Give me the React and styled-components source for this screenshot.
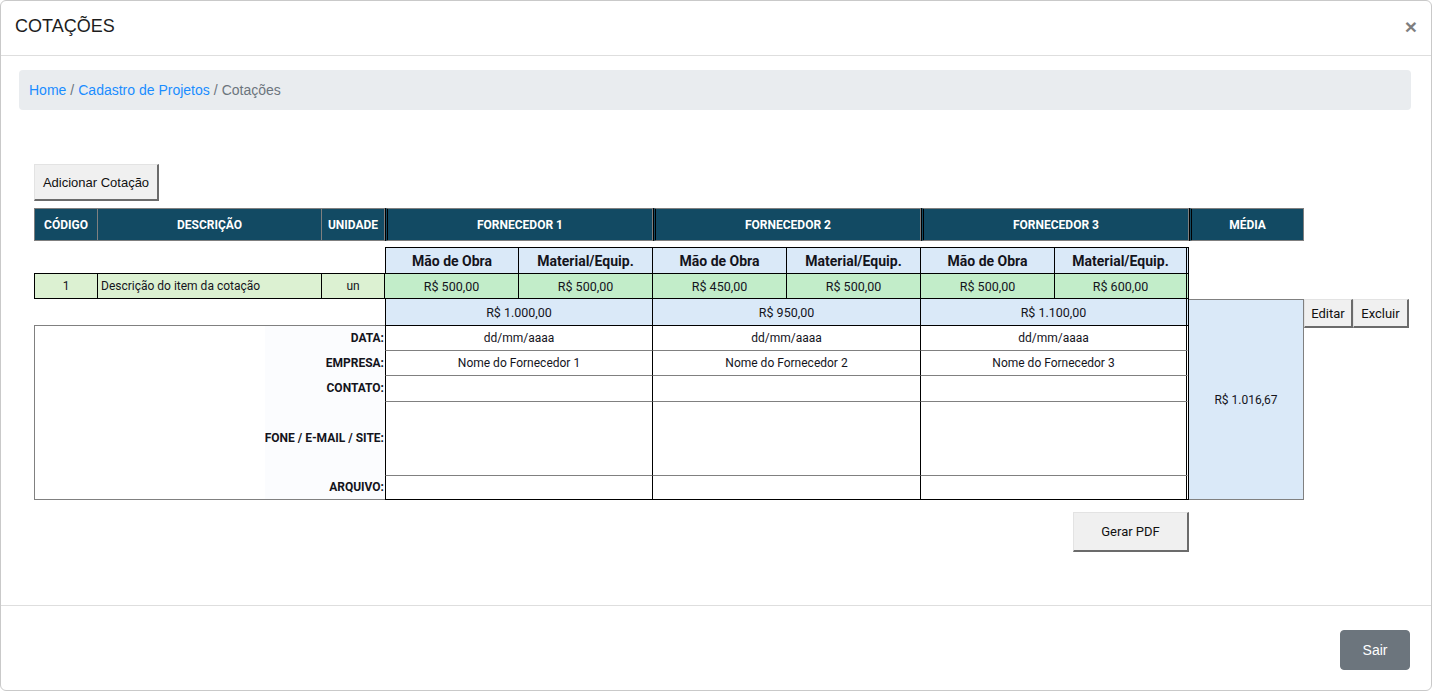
import React from 'react'
import styled, { createGlobalStyle } from 'styled-components'

const GlobalStyle = createGlobalStyle`
  html, body { margin: 0; padding: 0; background: #fff; }
  body { font-family: "Liberation Sans", Arial, sans-serif; }
`

const SHEET = 'Roboto, "Liberation Sans", sans-serif'

const fornecedores = [
  { nome: 'FORNECEDOR 1', mao: 'R$ 500,00', mat: 'R$ 500,00', total: 'R$ 1.000,00', empresa: 'Nome do Fornecedor 1' },
  { nome: 'FORNECEDOR 2', mao: 'R$ 450,00', mat: 'R$ 500,00', total: 'R$ 950,00', empresa: 'Nome do Fornecedor 2' },
  { nome: 'FORNECEDOR 3', mao: 'R$ 500,00', mat: 'R$ 600,00', total: 'R$ 1.100,00', empresa: 'Nome do Fornecedor 3' },
]

const infoRows = [
  { label: 'DATA:', key: 'data' },
  { label: 'EMPRESA:', key: 'empresa' },
  { label: 'CONTATO:', key: 'contato' },
  { label: 'TELEFONE / E-MAIL / SITE:', key: 'tel' },
  { label: 'ARQUIVO:', key: 'arquivo' },
]

function App() {
  return (
    <>
      <GlobalStyle />
      <Modal>
        <Header>
          <Title>COTAÇÕES</Title>
          <Close>×</Close>
        </Header>

        <Body>
          <Breadcrumb>
            <Crumb href="#">Home</Crumb>
            <Sep>/</Sep>
            <Crumb href="#">Cadastro de Projetos</Crumb>
            <Sep>/</Sep>
            <Current>Cotações</Current>
          </Breadcrumb>

          <Sheet>
            <AddButton>Adicionar Cotação</AddButton>

            <Grid>
              <HeadCell $col="1" $row="1" $first>CÓDIGO</HeadCell>
              <HeadCell $col="2" $row="1">DESCRIÇÃO</HeadCell>
              <HeadCell $col="3" $row="1">UNIDADE</HeadCell>
              {fornecedores.map((f, i) => (
                <HeadCell key={f.nome} $col={`${4 + i * 2} / span 2`} $row="1" $double>
                  {f.nome}
                </HeadCell>
              ))}
              <HeadCell $col="10" $row="1" $double>MÉDIA</HeadCell>

              {fornecedores.map((f, i) => (
                <React.Fragment key={f.nome + 'sub'}>
                  <SubHead $col={4 + i * 2} $row="3" $first={i === 0}>Mão de Obra</SubHead>
                  <SubHead $col={5 + i * 2} $row="3" $last={i === 2}>Material/Equip.</SubHead>
                </React.Fragment>
              ))}

              <ItemCell $col="1" $row="4" $first $bg="#dcf1d2">1</ItemCell>
              <ItemCell $col="2" $row="4" $bg="#dcf1d2" $left>Descrição do item da cotação</ItemCell>
              <ItemCell $col="3" $row="4" $bg="#dcf1d2">un</ItemCell>
              {fornecedores.map((f, i) => (
                <React.Fragment key={f.nome + 'val'}>
                  <ItemCell $col={4 + i * 2} $row="4" $bg="#c2edc9" $value>{f.mao}</ItemCell>
                  <ItemCell $col={5 + i * 2} $row="4" $bg="#c2edc9" $value $last={i === 2}>{f.mat}</ItemCell>
                </React.Fragment>
              ))}

              {fornecedores.map((f, i) => (
                <TotalCell key={f.nome + 'tot'} $col={`${4 + i * 2} / span 2`} $row="5" $first={i === 0} $last={i === 2}>
                  {f.total}
                </TotalCell>
              ))}
              <MediaCell $col="10" $row="5 / 11">R$ 1.016,67</MediaCell>
              <RowButton $col="11" $row="5">Editar</RowButton>
              <RowButton $col="12" $row="5">Excluir</RowButton>

              <LabelPanel $col="1 / 4" $row="6 / 11">
                {infoRows.map((r) => (
                  <Label key={r.key}>{r.label}</Label>
                ))}
              </LabelPanel>

              {infoRows.map((r, ri) =>
                fornecedores.map((f, i) => (
                  <InfoCell
                    key={r.key + f.nome}
                    $col={`${4 + i * 2} / span 2`}
                    $row={6 + ri}
                    $first={i === 0}
                    $last={i === 2}
                    $top={ri === 0}
                    $bottom={ri === infoRows.length - 1}
                  >
                    {r.key === 'data' ? 'dd/mm/aaaa' : r.key === 'empresa' ? f.empresa : ''}
                  </InfoCell>
                ))
              )}

              <PdfButton $col="9" $row="12">Gerar PDF</PdfButton>
            </Grid>
          </Sheet>
        </Body>

        <Footer>
          <ExitButton>Sair</ExitButton>
        </Footer>
      </Modal>
    </>
  )
}

export default App

const Modal = styled.div`
  width: 1432px;
  height: 691px;
  box-sizing: border-box;
  border: 1px solid #c9c9c9;
  border-radius: 6px;
  display: flex;
  flex-direction: column;
  overflow: hidden;
`

const Header = styled.div`
  height: 54px;
  flex: none;
  border-bottom: 1px solid #dedede;
  display: flex;
  align-items: center;
  justify-content: space-between;
  padding: 0 14px 0 14px;
`

const Title = styled.h5`
  margin: 0;
  font-family: "Liberation Sans", Arial, sans-serif;
  font-size: 18px;
  font-weight: 400;
  color: #1d1d1d;
  padding-bottom: 3px;
`

const Close = styled.span`
  font-family: "Liberation Sans", Arial, sans-serif;
  font-size: 21px;
  font-weight: 700;
  color: #000;
  opacity: 0.5;
  line-height: 1;
  padding-bottom: 3px;
`

const Body = styled.div`
  flex: 1;
  padding: 14px 20px 0 18px;
`

const Breadcrumb = styled.nav`
  height: 40px;
  background: #e9ecef;
  border-radius: 4px;
  display: flex;
  align-items: center;
  padding: 0 10px;
  font-family: "Liberation Sans", Arial, sans-serif;
  font-size: 14px;
`

const Crumb = styled.a`
  color: #1a8cff;
  text-decoration: none;
`

const Sep = styled.span`
  color: #6c757d;
  padding: 0 4px;
`

const Current = styled.span`
  color: #6c757d;
`

const Sheet = styled.div`
  padding: 54px 0 0 15px;
  display: flex;
  flex-direction: column;
  align-items: flex-start;
  gap: 7px;
`

const WinButton = styled.button`
  background: #f0f0f0;
  border-style: solid;
  border-width: 1px 2px 2px 1px;
  border-color: #e3e3e3 #6b6b6b #6b6b6b #e3e3e3;
  font-family: "Liberation Sans", Arial, sans-serif;
  font-size: 13px;
  color: #111;
  padding: 0;
  box-sizing: border-box;
`

const AddButton = styled(WinButton)`
  width: 125px;
  height: 37px;
`

const Grid = styled.div`
  display: grid;
  grid-template-columns: 64px 224px 63px repeat(6, 134px) 115px 49px 56px;
  grid-template-rows: 33px 6px 26px 26px 26px 25px 25px 26px 74px 25px 12px 40px;
`

const Cell = styled.div`
  grid-column: ${(p) => p.$col};
  grid-row: ${(p) => p.$row};
  display: flex;
  align-items: center;
  justify-content: center;
  box-sizing: border-box;
  overflow: hidden;
  white-space: nowrap;
  font-family: ${SHEET};
  font-size: 12px;
  color: #14141c;
`

const HeadCell = styled(Cell)`
  background: #124a63;
  color: #fff;
  font-weight: 700;
  border: solid #7f7f7f;
  border-width: 1px 1px 1px 0;
  ${(p) => p.$first && 'border-left: 1px solid #7f7f7f;'}
  ${(p) => p.$double && 'border-left: 3px double #000;'}
`

const SubHead = styled(Cell)`
  background: #dae9f8;
  font-weight: 700;
  font-size: 14px;
  border-top: 1px solid #000;
  border-right: ${(p) => (p.$last ? '3px double #000' : '1px solid #000')};
  ${(p) => p.$first && 'border-left: 1px solid #000;'}
`

const ItemCell = styled(Cell)`
  background: ${(p) => p.$bg};
  font-size: ${(p) => (p.$value ? '12.5px' : '12px')};
  justify-content: ${(p) => (p.$left ? 'flex-start' : 'center')};
  padding-left: ${(p) => (p.$left ? '3px' : '0')};
  border-top: 1px solid #000;
  border-bottom: 1px solid #000;
  border-right: ${(p) => (p.$last ? '3px double #000' : '1px solid #000')};
  ${(p) => p.$first && 'border-left: 1px solid #000;'}
`

const TotalCell = styled(Cell)`
  background: #dae9f8;
  font-size: 12.5px;
  border-right: ${(p) => (p.$last ? '3px double #000' : '1px solid #000')};
  ${(p) => p.$first && 'border-left: 1px solid #000;'}
`

const MediaCell = styled(Cell)`
  background: #dae9f8;
  border: 1px solid #808080;
  border-left: none;
`

const InfoCell = styled(Cell)`
  background: #fff;
  border-top: 1px solid ${(p) => (p.$top ? '#000' : '#808080')};
  border-right: ${(p) => (p.$last ? '3px double #000' : '1px solid #000')};
  ${(p) => p.$first && 'border-left: 1px solid #000;'}
  ${(p) => p.$bottom && 'border-bottom: 1px solid #000;'}
`

const LabelPanel = styled.div`
  grid-column: ${(p) => p.$col};
  grid-row: ${(p) => p.$row};
  border: 1px solid #808080;
  border-right: none;
  display: grid;
  grid-template-rows: 24px 25px 26px 74px 24px;
  justify-items: end;
`

const Label = styled.div`
  width: 120px;
  height: 100%;
  background: #fbfcfe;
  display: flex;
  align-items: center;
  justify-content: flex-end;
  overflow: hidden;
  white-space: nowrap;
  padding-right: 1px;
  box-sizing: border-box;
  font-family: ${SHEET};
  font-size: 12px;
  font-weight: 700;
  color: #14141c;
`

const RowButton = styled(WinButton)`
  grid-column: ${(p) => p.$col};
  grid-row: ${(p) => p.$row};
  height: 29px;
  align-self: start;
  font-family: ${SHEET};
  font-size: 13px;
`

const PdfButton = styled(WinButton)`
  grid-column: ${(p) => p.$col};
  grid-row: ${(p) => p.$row};
  justify-self: end;
  width: 116px;
  height: 40px;
  font-family: ${SHEET};
  font-size: 13px;
`

const Footer = styled.div`
  height: 85px;
  flex: none;
  border-top: 1px solid #dedede;
  display: flex;
  align-items: center;
  justify-content: flex-end;
  padding: 4px 21px 0 0;
  box-sizing: border-box;
`

const ExitButton = styled.button`
  width: 70px;
  height: 40px;
  background: #6c757d;
  color: #fff;
  border: 1px solid #6c757d;
  border-radius: 4px;
  font-family: "Liberation Sans", Arial, sans-serif;
  font-size: 14px;
`
